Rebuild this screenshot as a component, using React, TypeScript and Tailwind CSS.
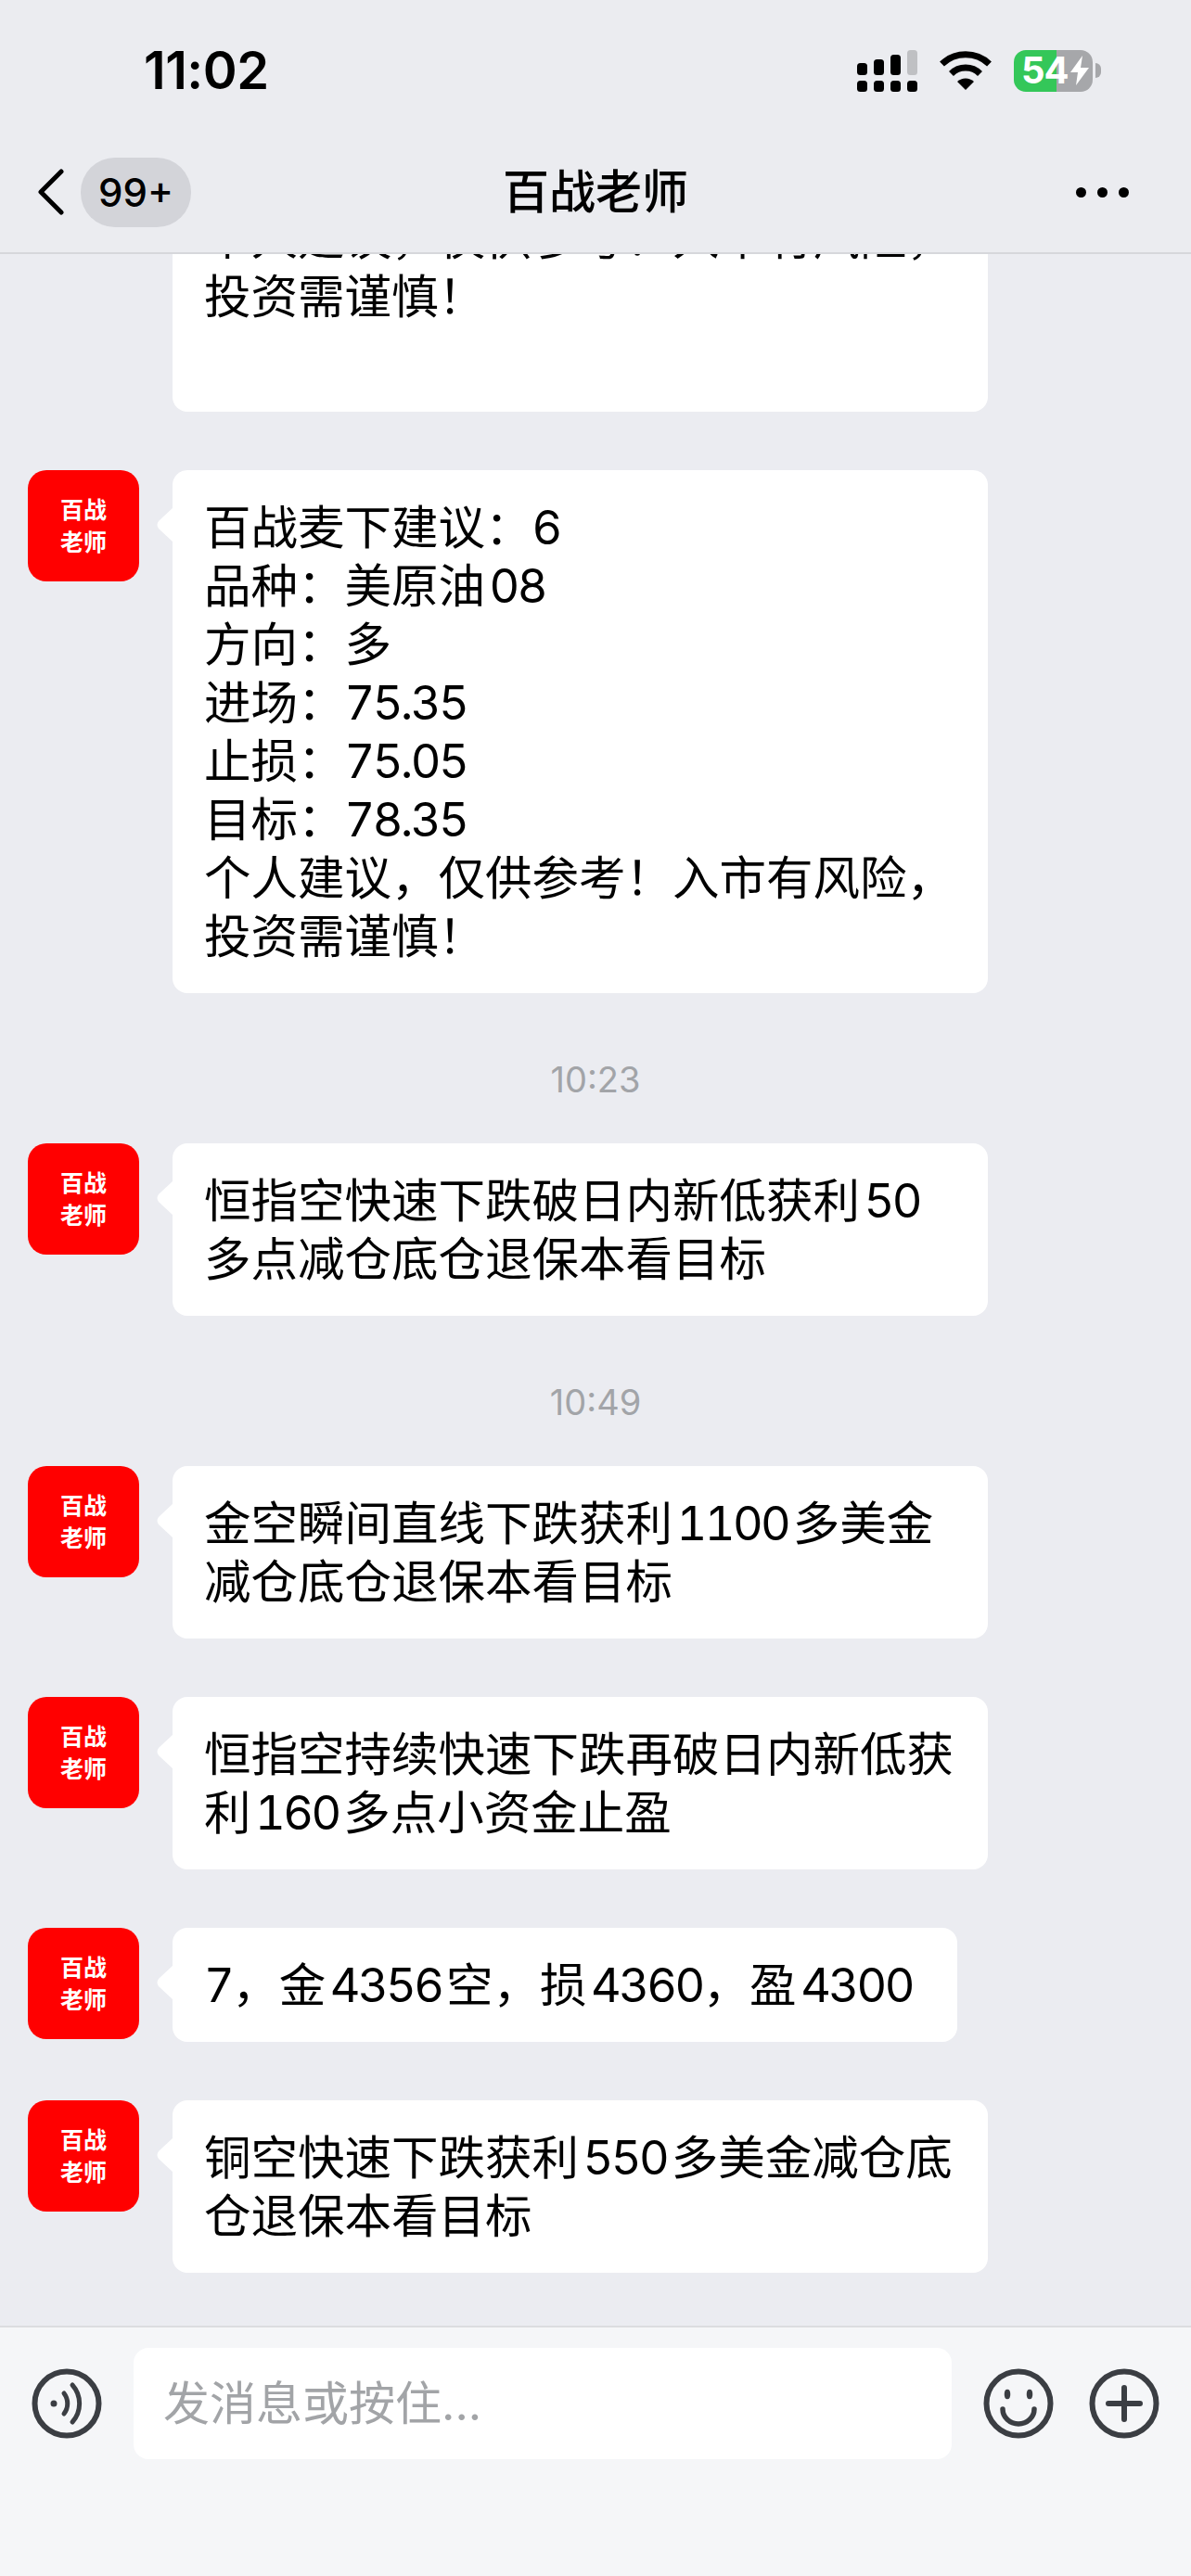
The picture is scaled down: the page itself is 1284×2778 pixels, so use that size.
import * as React from "react";

const Tail = () => (
  <svg className="absolute left-[-17px] top-[40px]" width="18" height="38" viewBox="0 0 18 38">
    <path d="M18 0 L2 15 Q-1 19 2 23 L18 38 Z" fill="#fff" />
  </svg>
);

const Avatar = () => (
  <div className="w-[120px] h-[120px] shrink-0 rounded-[20px] bg-[#ff0000] flex items-center justify-center text-center text-white font-bold text-[25px] leading-[35px] pt-[1px]">
    百战<br />老师
  </div>
);

// digits sit a bit tighter than Inter's default
const Line = ({ text }: { text: string }) => (
  <div>
    {text.split(/([\d.]+)/).map((part, i) =>
      i % 2 ? <span key={i} className="tabular-nums tracking-[-2.6px]">{part}</span> : part
    )}
  </div>
);

function Message({ lines, fit }: { lines: string[]; fit?: boolean }) {
  return (
    <div className="flex items-start pl-[30px] gap-[36px]">
      <Avatar />
      <div className={`relative bg-white rounded-[16px] px-[34px] py-[30px] text-[50.5px] leading-[63px] text-black whitespace-nowrap ${fit ? "w-[846px]" : "w-[879px]"}`}>
        <Tail />
        {lines.map((l, i) => <Line key={i} text={l} />)}
      </div>
    </div>
  );
}

const TimeLabel = ({ t }: { t: string }) => (
  <div className="text-center text-[#a2a4a8] text-[38px] leading-[46px] mt-[7px] mb-[-17px]">{t}</div>
);

const IconCircle = ({ children }: { children: React.ReactNode }) => (
  <svg width="76" height="76" viewBox="-38 -38 76 76" fill="none" stroke="#3b3e43" strokeWidth="6" strokeLinecap="round">
    <circle r="34.5" />
    {children}
  </svg>
);

export default function App() {
  return (
    <div lang="zh-CN" className="w-[1284px] h-[2778px] flex flex-col overflow-hidden bg-[#ebecf1] font-['Inter','Noto_Sans_CJK_SC',sans-serif]">
      <header className="relative z-10 h-[274px] shrink-0 bg-[#ebecf0] border-b-[2px] border-[#d6d7db]">
        {/* status bar */}
        <div className="h-[152px] flex items-center justify-between pl-[155px] pr-[97px]">
          <span className="text-[56px] font-semibold text-black tracking-[-0.5px]">11:02</span>
          <div className="flex items-center">
            <svg width="65" height="45" viewBox="0 0 65 45">
              <rect x="0" y="14" width="11" height="13" rx="3.5" />
              <rect x="18" y="10" width="11" height="17" rx="3.5" />
              <rect x="36" y="5" width="11" height="22" rx="3.5" />
              <rect x="54" y="0" width="11" height="27" rx="3.5" fill="#bfc0c3" />
              <rect x="0" y="33" width="11" height="12" rx="3.5" />
              <rect x="18" y="33" width="11" height="12" rx="3.5" />
              <rect x="36" y="33" width="11" height="12" rx="3.5" />
              <rect x="54" y="33" width="11" height="12" rx="3.5" />
            </svg>
            <svg className="ml-[23px]" width="58" height="42" viewBox="0 0 58 42">
              <path d="M3.5 14 A37 37 0 0 1 54.5 14" fill="none" stroke="#000" strokeWidth="7" />
              <path d="M13.5 24.5 A22 22 0 0 1 44.5 24.5" fill="none" stroke="#000" strokeWidth="7" />
              <path d="M20 33 A13 13 0 0 1 38 33 L29 42 Z" />
            </svg>
            <div className="relative ml-[23px] w-[85px] h-[45px] rounded-[13px] flex">
              <div className="w-[46px] bg-[#34c759] rounded-l-[13px]" />
              <div className="flex-1 bg-[#a6a7aa] rounded-r-[13px]" />
              <div className="absolute inset-0 flex items-center pl-[8px] text-white font-bold text-[40px] leading-none tracking-[-1px]">
                54
                <svg className="ml-[2px]" width="20" height="32" viewBox="0 0 20 32" fill="#fff">
                  <path d="M13 0 L0 18 H8 L6 32 L20 13 H11 Z" />
                </svg>
              </div>
            </div>
            <div className="ml-[3px] w-[6px] h-[16px] rounded-r-[6px] bg-[#a6a7aa]" />
          </div>
        </div>
        {/* nav */}
        <div className="h-[120px] pb-[10px] grid grid-cols-[1fr_auto_1fr] items-center">
          <div className="flex items-center pl-[41px]">
            <svg width="28" height="50" viewBox="0 0 28 50" fill="none" stroke="#000" strokeWidth="5" strokeLinecap="round" strokeLinejoin="round">
              <path d="M25 3 L3 25 L25 47" />
            </svg>
            <div className="ml-[18px] w-[119px] h-[75px] rounded-[37px] bg-[#d3d4d9] flex items-center justify-center text-[42px] font-medium text-black">99+</div>
          </div>
          <div className="text-[50px] font-medium text-black leading-none">百战老师</div>
          <div className="flex justify-end gap-[12px] pr-[67px]">
            <span className="w-[11px] h-[11px] rounded-full bg-black" />
            <span className="w-[11px] h-[11px] rounded-full bg-black" />
            <span className="w-[11px] h-[11px] rounded-full bg-black" />
          </div>
        </div>
      </header>

      {/* chat */}
      <main className="flex-1 min-h-0 overflow-hidden flex flex-col gap-[63px] relative">
        <div className="mt-[-79px] pl-[186px]">
          <div className="w-[879px] bg-white rounded-[16px] px-[34px] pt-[30px] pb-[93px] text-[50.5px] leading-[63px] text-black whitespace-nowrap">
            <div>个人建议，仅供参考！入市有风险，</div>
            <div>投资需谨慎！</div>
          </div>
        </div>
        <Message lines={["百战麦下建议：6", "品种：美原油\u200a08", "方向：多", "进场：75.35", "止损：75.05", "目标：78.35", "个人建议，仅供参考！入市有风险，", "投资需谨慎！"]} />
        <TimeLabel t="10:23" />
        <Message lines={["恒指空快速下跌破日内新低获利\u200a50", "多点减仓底仓退保本看目标"]} />
        <TimeLabel t="10:49" />
        <Message lines={["金空瞬间直线下跌获利\u200a1100\u200a多美金", "减仓底仓退保本看目标"]} />
        <Message lines={["恒指空持续快速下跌再破日内新低获", "利\u200a160\u200a多点小资金止盈"]} />
        <Message fit lines={["7，金\u200a4356\u200a空，损\u200a4360，盈\u200a4300"]} />
        <Message lines={["铜空快速下跌获利\u200a550\u200a多美金减仓底", "仓退保本看目标"]} />
      </main>

      {/* composer */}
      <footer className="h-[270px] shrink-0 bg-[#f5f6f8] border-t-[2px] border-[#dcdde0] pt-[22px] pl-[34px] pr-[34px] flex items-start">
        <div className="h-[120px] flex items-center">
          <IconCircle>
            <circle cx="-14" cy="0" r="2.5" fill="#3b3e43" strokeWidth="2" />
            <path d="M-3 -11 A18 18 0 0 1 -3 11" strokeWidth="5" />
            <path d="M6 -20 A30 30 0 0 1 6 20" strokeWidth="5" />
          </IconCircle>
        </div>
        <div className="ml-[34px] w-[882px] h-[120px] bg-white rounded-[16px] flex items-center pl-[32px] text-[#a2a4a7] text-[50px]">发消息或按住...</div>
        <div className="h-[120px] ml-[34px] flex items-center gap-[38px]">
          <IconCircle>
            <ellipse cx="-12" cy="-10" rx="2" ry="4" fill="#3b3e43" strokeWidth="2.5" />
            <ellipse cx="12" cy="-10" rx="2" ry="4" fill="#3b3e43" strokeWidth="2.5" />
            <path d="M-17 6 A17 16 0 0 0 17 6" strokeWidth="5.5" />
          </IconCircle>
          <IconCircle>
            <path d="M-17 0 H17 M0 -17 V17" />
          </IconCircle>
        </div>
      </footer>
    </div>
  );
}
